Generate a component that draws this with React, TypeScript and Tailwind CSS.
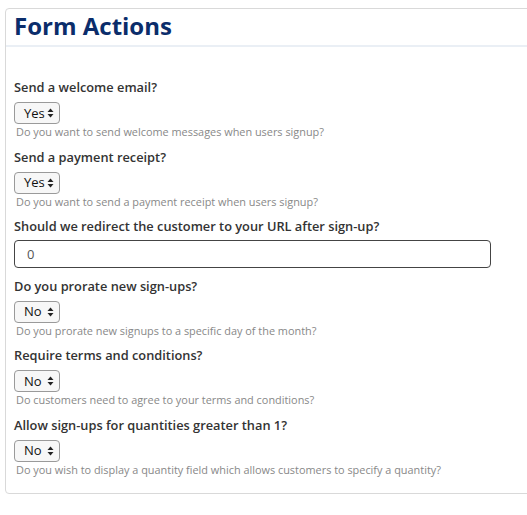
import React from 'react';

const font = { fontFamily: '"Open Sans", "Lato", sans-serif' };

function Arrows() {
  return (
    <svg width="7" height="10" viewBox="0 0 7 10" className="shrink-0">
      <path d="M3.5 0.5 L6.5 4 H0.5 Z" fill="#222" />
      <path d="M3.5 9.5 L6.5 6 H0.5 Z" fill="#222" />
    </svg>
  );
}

function YesNo({ value }: { value: string }) {
  return (
    <div className="w-[46px] h-[22px] flex items-center justify-between rounded-[4px] border border-[#9a9a9a] bg-[#f7f7f7] pl-[9px] pr-[5px] text-[13px] leading-none text-[#111]">
      <span>{value}</span>
      <Arrows />
    </div>
  );
}

function Field({ label, value, help }: { label: string; value: string; help: string }) {
  return (
    <div className="flex flex-col">
      <label className="text-[12.8px] font-semibold text-[#333] leading-[18px]">{label}</label>
      <div className="mt-[6px]">
        <YesNo value={value} />
      </div>
      <p className="pl-[2px] text-[10.9px] leading-[15px] text-[#888]">{help}</p>
    </div>
  );
}

export default function App() {
  return (
    <div className="w-[527px] h-[515px] overflow-hidden bg-white pt-[8px] pl-[5px]" style={font}>
      <div className="w-[540px] border border-[#d9d9d9] rounded-[4px] bg-white">
        <div className="px-[8px] pt-[1px] pb-[3px] border-b-2 border-[#eaeff5]">
          <h2 className="text-[24px] font-bold leading-[32px] text-[#0b2d6b]">Form Actions</h2>
        </div>
        <div className="px-[8px] pt-[31px] pb-[16px] flex flex-col gap-[8.5px]">
          <Field
            label="Send a welcome email?"
            value="Yes"
            help="Do you want to send welcome messages when users signup?"
          />
          <Field
            label="Send a payment receipt?"
            value="Yes"
            help="Do you want to send a payment receipt when users signup?"
          />
          <div className="flex flex-col">
            <label className="text-[12.8px] font-semibold text-[#333] leading-[18px]">
              Should we redirect the customer to your URL after sign-up?
            </label>
            <input
              defaultValue="0"
              className="mt-[5px] w-[477px] h-[28px] rounded-[4px] border border-[#444] px-[12px] text-[13px] text-[#555] outline-none"
            />
          </div>
          <Field
            label="Do you prorate new sign-ups?"
            value="No"
            help="Do you prorate new signups to a specific day of the month?"
          />
          <Field
            label="Require terms and conditions?"
            value="No"
            help="Do customers need to agree to your terms and conditions?"
          />
          <Field
            label="Allow sign-ups for quantities greater than 1?"
            value="No"
            help="Do you wish to display a quantity field which allows customers to specify a quantity?"
          />
        </div>
      </div>
    </div>
  );
}
